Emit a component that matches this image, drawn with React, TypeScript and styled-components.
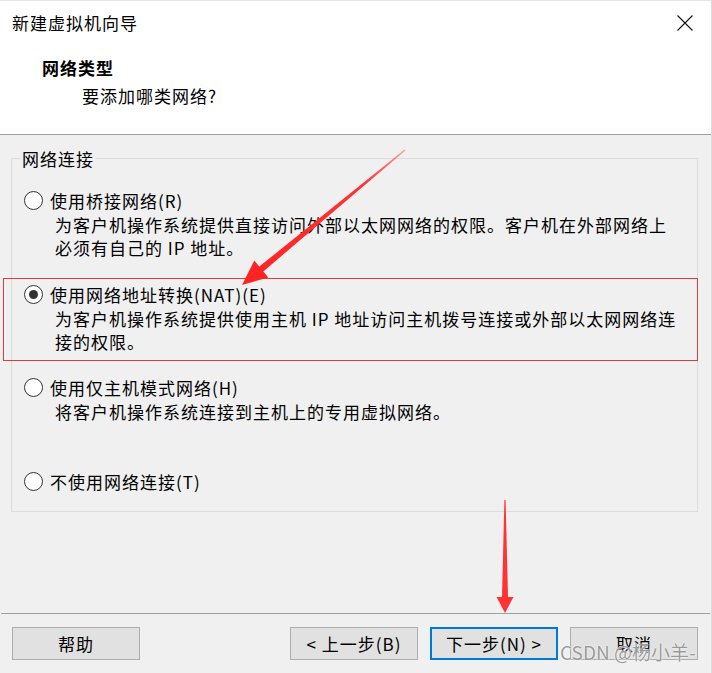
import styled, { createGlobalStyle } from 'styled-components'

const GlobalStyle = createGlobalStyle`
    html, body {
        margin: 0;
        padding: 0;
        overflow: hidden;
        background: #f0f0f0;
    }
`

type NetOption = {
    label: string
    lines: Array<string>
    checked?: boolean
}

const options: Array<NetOption> = [
    {
        label: '使用桥接网络(R)',
        lines: ['为客户机操作系统提供直接访问外部以太网网络的权限。客户机在外部网络上', '必须有自己的 IP 地址。'],
    },
    {
        label: '使用网络地址转换(NAT)(E)',
        lines: ['为客户机操作系统提供使用主机 IP 地址访问主机拨号连接或外部以太网网络连', '接的权限。'],
        checked: true,
    },
    {
        label: '使用仅主机模式网络(H)',
        lines: ['将客户机操作系统连接到主机上的专用虚拟网络。'],
    },
    {
        label: '不使用网络连接(T)',
        lines: [],
    },
]

function CloseIcon() {
    return (
        <svg width="16" height="16" viewBox="0 0 16 16">
            <path d="M0.5 0.5 L15.5 15.5 M15.5 0.5 L0.5 15.5" stroke="#111" strokeWidth="1.1" fill="none" />
        </svg>
    )
}

function Marks() {
    return (
        <Overlay width="712" height="673" viewBox="0 0 712 673">
            <defs>
                <linearGradient id="tailFade" x1="405" y1="150" x2="242" y2="285" gradientUnits="userSpaceOnUse">
                    <stop offset="0" stopColor="#ff9a9a" />
                    <stop offset="0.25" stopColor="#f33" />
                    <stop offset="1" stopColor="#f22" />
                </linearGradient>
            </defs>
            <rect x="3.5" y="278.5" width="694" height="82" fill="none" stroke="#e33b3b" strokeWidth="1" />
            <polygon
                points="405.4,150.5 263.3,271.4 268.3,277.5 242,285 254.3,260.5 259.3,266.6 404.6,149.5"
                fill="url(#tailFade)"
            />
            <polygon points="505.6,500 508,597 513.5,597 505,613 496.5,597 502,597 504.4,500" fill="#f33" />
        </Overlay>
    )
}

export default function App() {
    return (
        <>
            <GlobalStyle />
            <Window>
                <Header>
                    <TitleRow>
                        <span>新建虚拟机向导</span>
                        <CloseIcon />
                    </TitleRow>
                    <Heading>网络类型</Heading>
                    <SubHeading>要添加哪类网络?</SubHeading>
                </Header>
                <Body>
                    <Group>
                        <legend>网络连接</legend>
                        <OptionList>
                            {options.map(opt => (
                                <Option key={opt.label}>
                                    <RadioRow>
                                        <Radio checked={!!opt.checked} />
                                        <span>{opt.label}</span>
                                    </RadioRow>
                                    {opt.lines.length > 0 && (
                                        <Desc>
                                            {opt.lines.map(line => <div key={line}>{line}</div>)}
                                        </Desc>
                                    )}
                                </Option>
                            ))}
                        </OptionList>
                    </Group>
                </Body>
                <Footer>
                    <Button>帮助</Button>
                    <Spacer />
                    <Button>&lt; 上一步(B)</Button>
                    <Button focused>下一步(N) &gt;</Button>
                    <Button>取消</Button>
                </Footer>
                <StatusText>FEEEEEEE EI</StatusText>
                <Watermark>CSDN @杨小羊-</Watermark>
                <Marks />
            </Window>
        </>
    )
}

const Window = styled.div`
    position: relative;
    width: 712px;
    height: 673px;
    overflow: hidden;
    box-sizing: border-box;
    border-right: 1px solid #dcdcdc;
    background: #f0f0f0;
    display: flex;
    flex-direction: column;
    font-family: "Noto Sans CJK SC", "Noto Sans", sans-serif;
    font-size: 17px;
    letter-spacing: 1px;
    line-height: 23px;
    color: #000;
`

const Header = styled.div`
    height: 135px;
    box-sizing: border-box;
    flex-shrink: 0;
    background: #fff;
    border-top: 1px solid #e6e6e6;
    border-bottom: 1px solid #a0a0a0;
    padding-top: 10px;
`

const TitleRow = styled.div`
    display: flex;
    justify-content: space-between;
    align-items: center;
    padding: 0 18px 0 12px;
    svg {
        display: block;
    }
`

const Heading = styled.div`
    margin-top: 22px;
    padding-left: 42px;
    font-weight: 700;
`

const SubHeading = styled.div`
    margin-top: 5px;
    padding-left: 82px;
`

const Body = styled.div`
    flex: 1;
    padding-top: 12px;
`

const Group = styled.fieldset`
    margin: 0 0 0 11px;
    width: 687px;
    height: 365px;
    box-sizing: border-box;
    padding: 0;
    border: 1px solid #dcdcdc;
    legend {
        margin-left: 8px;
        padding: 0 2px;
    }
`

const OptionList = styled.div`
    display: grid;
    grid-template-rows: 93.5px 93.5px 93.5px auto;
    padding-top: 19px;
`

const Option = styled.div`
    display: flex;
    flex-direction: column;
`

const RadioRow = styled.div`
    display: flex;
    align-items: center;
    gap: 7px;
    padding-left: 12px;
`

const Radio = styled.span<{ checked: boolean }>`
    width: 19px;
    height: 19px;
    box-sizing: border-box;
    border-radius: 50%;
    border: 1px solid #333;
    background: #fff;
    display: flex;
    align-items: center;
    justify-content: center;
    &::after {
        content: '';
        display: ${p => (p.checked ? 'block' : 'none')};
        width: 9px;
        height: 9px;
        border-radius: 50%;
        background: #333;
    }
`

const Desc = styled.div`
    margin-top: 1px;
    padding-left: 43px;
`

const Footer = styled.div`
    flex-shrink: 0;
    height: 60px;
    box-sizing: border-box;
    margin: 0 1px 0 1px;
    border-top: 1px solid #a0a0a0;
    display: flex;
    align-items: flex-start;
    gap: 12px;
    padding: 13px 12px 0 11px;
`

const Spacer = styled.div`
    flex: 1;
`

const Button = styled.div<{ focused?: boolean }>`
    width: 128px;
    height: 33px;
    box-sizing: border-box;
    background: #e1e1e1;
    border: ${p => (p.focused ? '2px solid #0078d7' : '1px solid #adadad')};
    display: flex;
    align-items: center;
    justify-content: center;
    white-space: pre;
`

const StatusText = styled.div`
    position: absolute;
    left: 27px;
    top: 666px;
    font-size: 15px;
    font-weight: 700;
    color: #555;
    letter-spacing: 2px;
`

const Watermark = styled.div`
    position: absolute;
    left: 560px;
    top: 640px;
    font-size: 19px;
    letter-spacing: 0;
    color: rgba(135, 135, 135, 0.85);
    text-shadow: 0 0 2px #fff, 0 0 1px #fff;
`

const Overlay = styled.svg`
    position: absolute;
    left: 0;
    top: 0;
    pointer-events: none;
`
